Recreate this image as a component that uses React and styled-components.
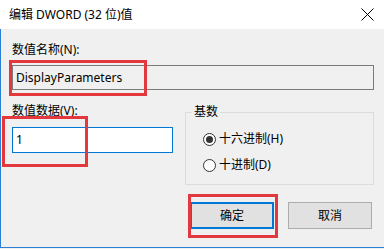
import React from "react";
import styled, { createGlobalStyle } from "styled-components";

const Global = createGlobalStyle`
  html, body { margin: 0; padding: 0; background: #f0f0f0; overflow: hidden; }
  body { width: 384px; height: 249px; }
  * { box-sizing: border-box; }
`;

const FONT = `"Segoe UI", "Noto Sans", "Noto Sans CJK SC", sans-serif`;

const Window = styled.div`
  position: relative;
  width: 384px;
  height: 248px;
  background: #f0f0f0;
  font-family: ${FONT};
  font-size: 12px;
  color: #000;
  border-bottom: 1px solid #2b7fd4;
  display: flex;
  flex-direction: column;
`;

const TitleBar = styled.div`
  height: 29px;
  flex: none;
  background: #ffffff;
  display: flex;
  align-items: center;
  justify-content: space-between;
  padding: 0 10px 0 9px;
  font-size: 12px;
  line-height: 16px;
`;

const Body = styled.div`
  flex: 1;
  border-left: 1px solid #2b7fd4;
  padding: 0 10px 0 11px;
  display: flex;
  flex-direction: column;
`;

const Label = styled.div`
  height: 16px;
  line-height: 16px;
  margin-top: ${(p) => p.$mt || 0}px;
  white-space: nowrap;
`;

const Field = styled.div`
  height: ${(p) => p.$h}px;
  margin-top: ${(p) => p.$mt}px;
  border: 1px solid ${(p) => (p.$active ? "#0078d7" : "#7a7a7a")};
  background: ${(p) => (p.$active ? "#ffffff" : "#f0f0f0")};
  display: flex;
  align-items: center;
  padding-left: 3px;
  line-height: 16px;
`;

const Row = styled.div`
  display: grid;
  grid-template-columns: 161px 189px;
  column-gap: 12px;
  margin-top: 13px;
  align-items: start;
`;

const Col = styled.div`
  display: flex;
  flex-direction: column;
`;

const Group = styled.div`
  position: relative;
  margin-top: 9px;
  height: 73px;
  border: 1px solid #dcdcdc;
  padding: 18px 0 0 17px;
  display: flex;
  flex-direction: column;
  gap: 10px;
`;

const Legend = styled.span`
  position: absolute;
  left: 6px;
  top: -9px;
  padding: 0 2px;
  line-height: 16px;
  background: #f0f0f0;
`;

const RadioRow = styled.div`
  display: flex;
  align-items: center;
  height: 16px;
  gap: 3px;
  line-height: 16px;
`;

const Circle = styled.span`
  width: 13px;
  height: 13px;
  border-radius: 50%;
  border: 1px solid #333333;
  background: #ffffff;
  display: flex;
  align-items: center;
  justify-content: center;
  &::after {
    content: "";
    display: ${(p) => (p.$on ? "block" : "none")};
    width: 7px;
    height: 7px;
    border-radius: 50%;
    background: #333333;
  }
`;

const Buttons = styled.div`
  display: flex;
  justify-content: flex-end;
  gap: 14px;
  margin-top: 17px;
  margin-right: 2px;
`;

const Button = styled.div`
  width: ${(p) => p.$w}px;
  height: 27px;
  background: #e1e1e1;
  border: ${(p) => (p.$default ? "2px solid #0078d7" : "1px solid #adadad")};
  display: flex;
  align-items: center;
  justify-content: center;
  line-height: 16px;
`;

const Mark = styled.div`
  position: absolute;
  border: 3px solid #e3383e;
  pointer-events: none;
`;

function CloseIcon() {
  return (
    <svg width="13" height="13" viewBox="0 0 13 13">
      <path d="M0.5 0.5 L12.5 12.5 M12.5 0.5 L0.5 12.5" stroke="#000" strokeWidth="1" fill="none" />
    </svg>
  );
}

export default function App() {
  return (
    <>
      <Global />
      <Window>
        <TitleBar>
          <span>编辑 DWORD (32 位)值</span>
          <CloseIcon />
        </TitleBar>
        <Body>
          <Label $mt={13}>数值名称(N):</Label>
          <Field $h={25} $mt={7}>DisplayParameters</Field>
          <Row>
            <Col>
              <Label>数值数据(V):</Label>
              <Field $h={26} $mt={8} $active>1</Field>
            </Col>
            <Group>
              <Legend>基数</Legend>
              <RadioRow>
                <Circle $on />
                <span>十六进制(H)</span>
              </RadioRow>
              <RadioRow>
                <Circle />
                <span>十进制(D)</span>
              </RadioRow>
            </Group>
          </Row>
          <Buttons>
            <Button $w={84} $default>确定</Button>
            <Button $w={84}>取消</Button>
          </Buttons>
        </Body>
        <Mark style={{ left: 9, top: 60, width: 138, height: 36 }} />
        <Mark style={{ left: 2, top: 116, width: 86, height: 51 }} />
        <Mark style={{ left: 188, top: 194, width: 90, height: 44 }} />
      </Window>
    </>
  );
}
